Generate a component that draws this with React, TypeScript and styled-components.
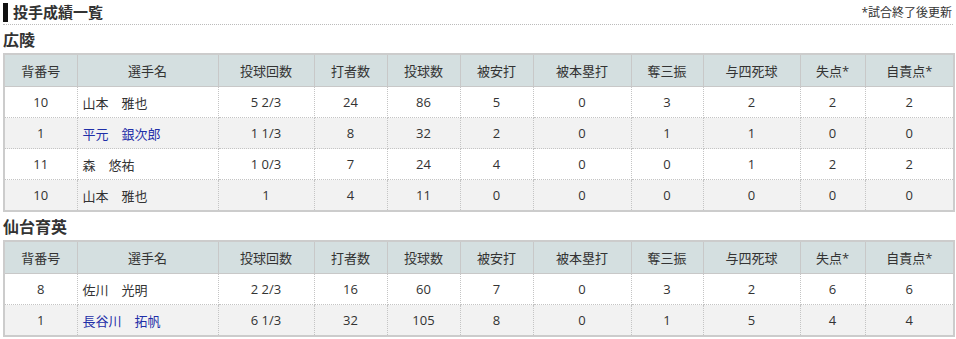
import styled, { createGlobalStyle } from "styled-components";

const GlobalStyle = createGlobalStyle`
  body {
    margin: 0;
    background: #fff;
    color: #333;
    font-family: "Open Sans", "Noto Sans CJK JP", sans-serif;
  }
`;

const Container = styled.div`
  padding: 0 3px;
  width: 950px;
`;

const TitleBar = styled.div`
  display: flex;
  align-items: center;
  justify-content: space-between;
  height: 24px;
  border-bottom: 1px dotted #bbb;
`;

const Title = styled.h2`
  margin: 0;
  display: flex;
  align-items: center;
  gap: 5px;
  font-size: 15px;
  font-weight: bold;
  color: #333;
  line-height: 19px;
  &::before {
    content: "";
    display: block;
    width: 5px;
    height: 19px;
    background: #111;
  }
`;

const Note = styled.span`
  font-size: 12px;
  color: #333;
  margin-right: 1px;
`;

const TeamName = styled.h3`
  margin: 0;
  padding: 4px 0 1px;
  font-size: 16px;
  line-height: 23px;
  font-weight: bold;
  color: #333;
`;

const Table = styled.table`
  width: 950px;
  border-collapse: collapse;
  table-layout: fixed;
  border: 2px solid #ccc;
  font-size: 13px;
`;

const Th = styled.th`
  background: #d4dfe0;
  border: 1px solid #c8c8c8;
  height: 31px;
  padding: 0;
  font-weight: normal;
  color: #333;
  text-align: center;
`;

const Row = styled.tr<{ $alt: boolean }>`
  background: ${(p) => (p.$alt ? "#f2f2f2" : "#fff")};
`;

const Td = styled.td<{ $left?: boolean }>`
  border: 1px dotted #c4c4c4;
  height: 30px;
  padding: 0 ${(p) => (p.$left ? "5px" : "0")};
  text-align: ${(p) => (p.$left ? "left" : "center")};
  color: #333;
`;

const PlayerLink = styled.a`
  color: #1f2fa8;
  text-decoration: none;
`;

interface Pitcher {
  no: string;
  name: string;
  link?: boolean;
  stats: string[];
}

const widths = [73, 141, 96, 73, 73, 73, 98, 72, 97, 65, 89];
const headers = ["背番号", "選手名", "投球回数", "打者数", "投球数", "被安打", "被本塁打", "奪三振", "与四死球", "失点*", "自責点*"];

const koryo: Pitcher[] = [
  { no: "10", name: "山本　雅也", stats: ["5 2/3", "24", "86", "5", "0", "3", "2", "2", "2"] },
  { no: "1", name: "平元　銀次郎", link: true, stats: ["1 1/3", "8", "32", "2", "0", "1", "1", "0", "0"] },
  { no: "11", name: "森　悠祐", stats: ["1 0/3", "7", "24", "4", "0", "0", "1", "2", "2"] },
  { no: "10", name: "山本　雅也", stats: ["1", "4", "11", "0", "0", "0", "0", "0", "0"] },
];

const sendai: Pitcher[] = [
  { no: "8", name: "佐川　光明", stats: ["2 2/3", "16", "60", "7", "0", "3", "2", "6", "6"] },
  { no: "1", name: "長谷川　拓帆", link: true, stats: ["6 1/3", "32", "105", "8", "0", "1", "5", "4", "4"] },
];

const PitcherTable = ({ rows }: { rows: Pitcher[] }) => (
  <Table>
    <colgroup>
      {widths.map((w, i) => (
        <col key={i} style={{ width: w }} />
      ))}
    </colgroup>
    <thead>
      <tr>
        {headers.map((h) => (
          <Th key={h}>{h}</Th>
        ))}
      </tr>
    </thead>
    <tbody>
      {rows.map((r, i) => (
        <Row key={i} $alt={i % 2 === 1}>
          <Td>{r.no}</Td>
          <Td $left>{r.link ? <PlayerLink href="#">{r.name}</PlayerLink> : r.name}</Td>
          {r.stats.map((s, j) => (
            <Td key={j}>{s}</Td>
          ))}
        </Row>
      ))}
    </tbody>
  </Table>
);

const App = () => (
  <Container>
    <GlobalStyle />
    <TitleBar>
      <Title>投手成績一覧</Title>
      <Note>*試合終了後更新</Note>
    </TitleBar>
    <TeamName>広陵</TeamName>
    <PitcherTable rows={koryo} />
    <TeamName>仙台育英</TeamName>
    <PitcherTable rows={sendai} />
  </Container>
);

export default App;
